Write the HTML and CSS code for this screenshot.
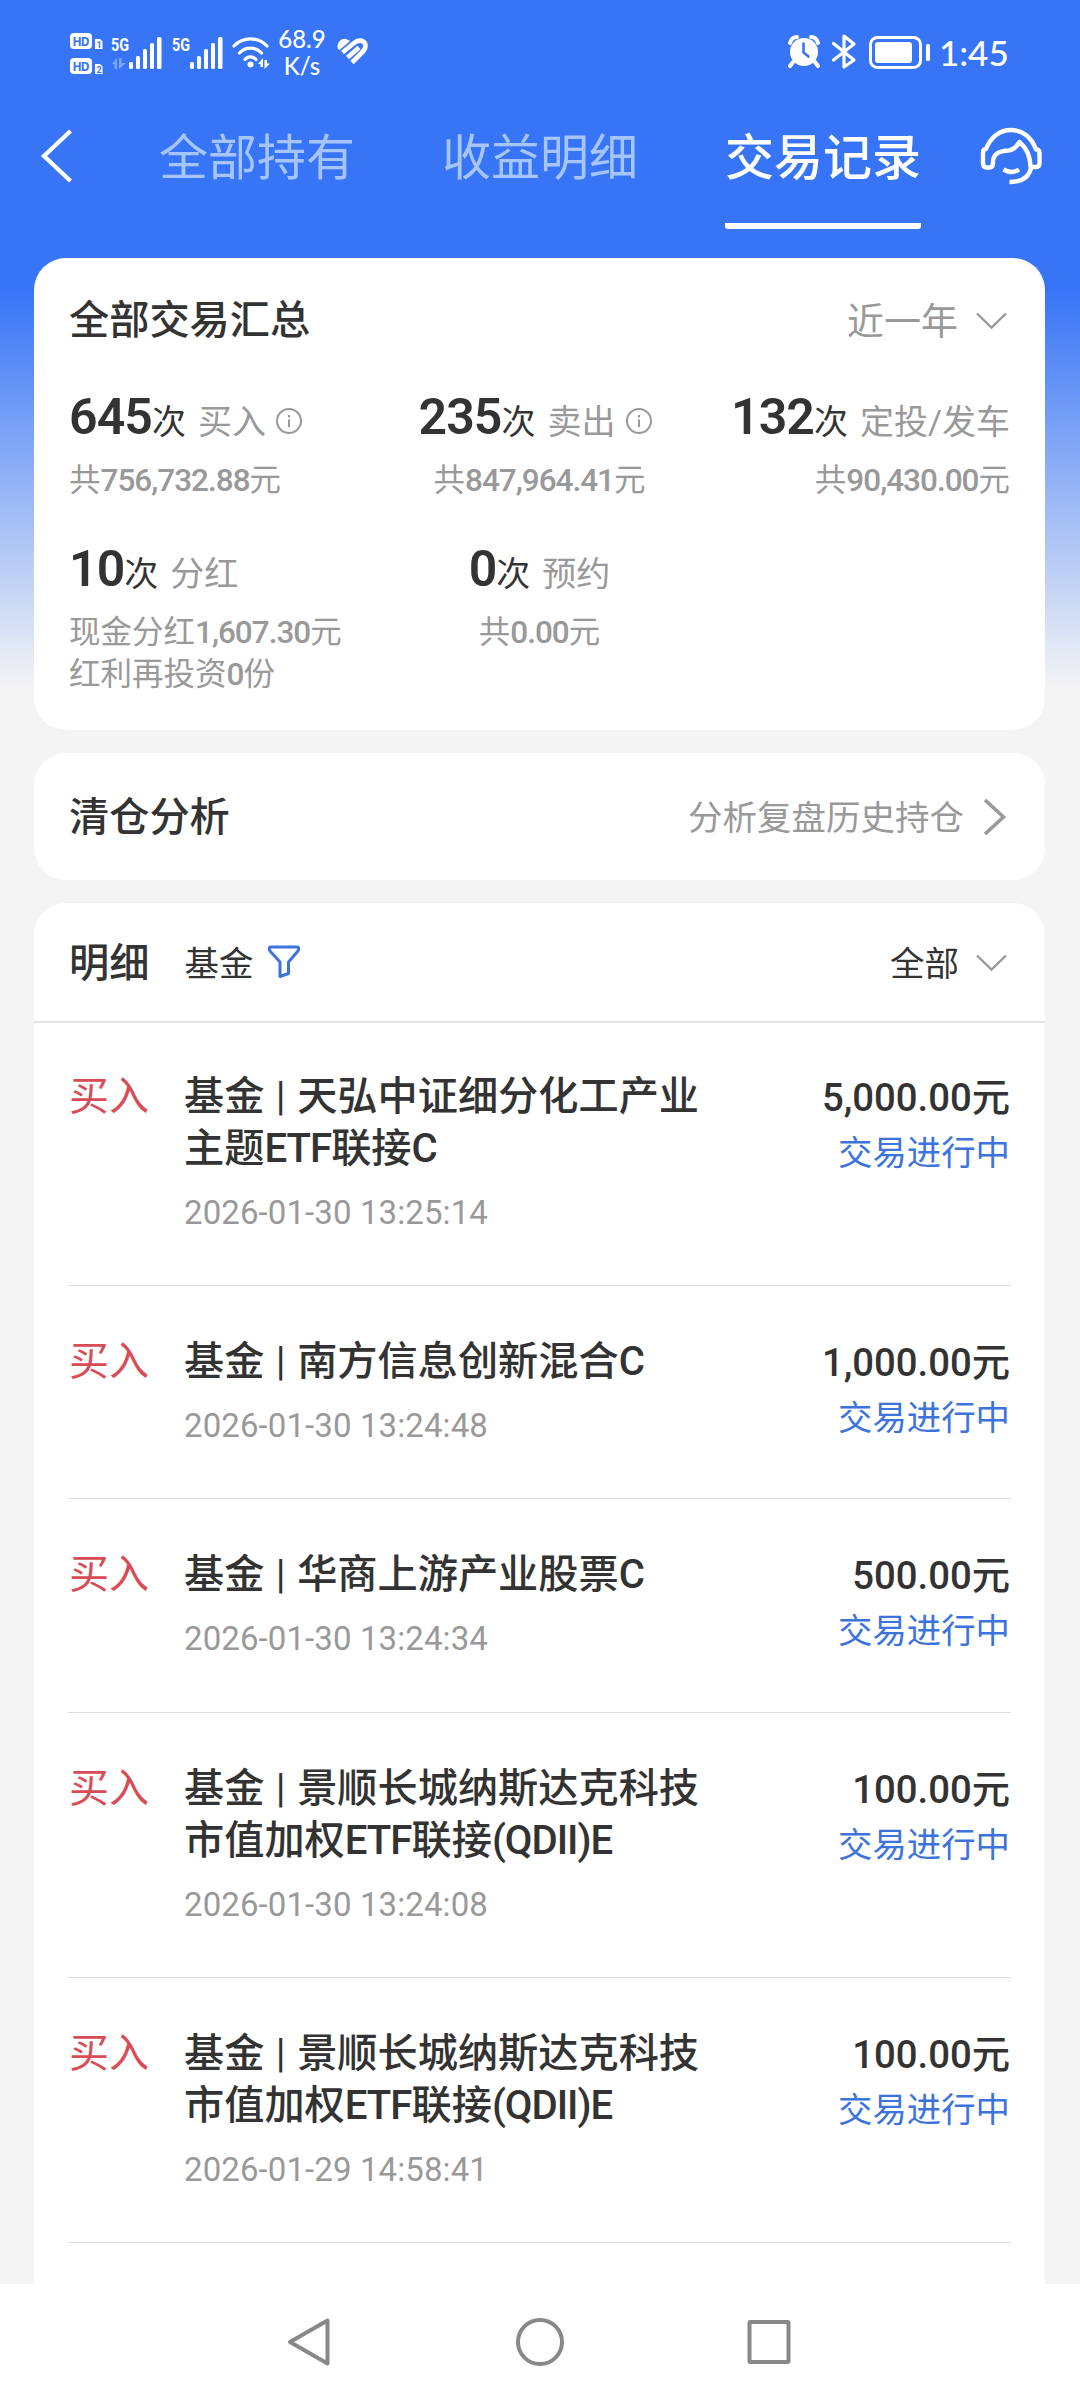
FILE: index.html
```html
<!DOCTYPE html>
<html lang="zh-CN">
<head>
<meta charset="utf-8">
<title>交易记录</title>
<link rel="stylesheet" href="styles.css">
</head>
<body>
<div class="app">
  <header class="top">
    <div class="status">
      <svg class="status-left" width="202" height="60" viewBox="0 0 202 60" fill="#fff">
        <rect x="0" y="12" width="22" height="16" rx="4" />
        <rect x="0" y="37" width="22" height="16" rx="4" />
        <g class="hd"><text x="2.5" y="25" textLength="17">HD</text><text x="2.5" y="50" textLength="17">HD</text></g>
        <path d="M25 18h5l2.500 2.500V28H25z" />
        <path d="M25 43h5l2.500 2.500V53H25z" />
        <g class="sim"><text x="26.500" y="27">1</text><text x="26.500" y="52">2</text></g>
        <g class="net"><text x="41" y="30" textLength="18" lengthAdjust="spacingAndGlyphs">5G</text><text x="102" y="30" textLength="18" lengthAdjust="spacingAndGlyphs">5G</text></g>
        <path opacity=".35" d="M42 43l5-6v11h-2.500v-5zM49 37h2.500v5H56l-7 6z" />
        <g id="bars"><rect x="59" y="41" width="4" height="7" rx="1.500"/><rect x="66" y="35" width="4" height="13" rx="1.500"/><rect x="73" y="28" width="4" height="20" rx="1.500"/><rect x="80" y="22" width="4" height="26" rx="1.500"/><rect x="87" y="16" width="4.500" height="32" rx="1.500"/></g>
        <use href="#bars" x="61" />
        <g fill="none" stroke="#fff" stroke-width="3.200" stroke-linecap="round"><path d="M164 25c9-9.500 24-9.500 33 0M169.500 32c6-6.500 16-6.500 22 0M175 38.500c3-3.500 8-3.500 11 0"/></g>
        <circle cx="180.500" cy="43.500" r="3" />
        <path d="M188 43l5-6v9h-2.500v-3zM194.500 39h2.500v3.500h3l-5.500 5.500z" />
      </svg>
      <div class="speed"><span>68.9</span><span>K/s</span></div>
      <svg class="health" width="32" height="28" viewBox="0 0 32 28">
        <path class="lobe" d="M1 11C-1 5 4 0 9 1l4 2L2.500 12z"/>
        <path class="pulse" d="M5.500 14.500L17 5C21 1.500 26 2 28 5.500c1.500 3.500 0 6-3 9L15 24.500M10.500 19.500L22 9.500"/>
      </svg>
      <svg class="status-right" width="150" height="36" viewBox="0 0 150 36" fill="#fff">
        <circle cx="16" cy="18" r="14"/>
        <path d="M5 28l-3 4M27 28l3 4M2 9c1-4 4-6 7-6M30 9c-1-4-4-6-7-6" fill="none" stroke="#fff" stroke-width="4" stroke-linecap="round"/>
        <path d="M15.500 9.500v9l5 4" fill="none" stroke="#3875f6" stroke-width="2.600" stroke-linecap="round"/>
        <path d="M45.500 9.500L66 26l-10 7V2l10 8-20.500 16" fill="none" stroke="#fff" stroke-width="3.200" stroke-linejoin="round" stroke-linecap="round"/>
        <rect x="82.500" y="3.500" width="50" height="30" rx="7" fill="none" stroke="#fff" stroke-width="3"/>
        <rect x="87" y="8" width="37" height="21" rx="3"/>
        <rect x="138" y="10" width="4" height="17" rx="1.500"/>
      </svg>
      <span class="clock">1:45</span>
    </div>
    <nav class="nav">
      <svg class="back" width="34" height="56" viewBox="0 0 34 56"><path d="M31.500 3L5 28l26.500 25"/></svg>
      <span class="tab">全部持有</span>
      <span class="tab">收益明细</span>
      <span class="tab tab-on">交易记录</span>
      <svg class="service" width="64" height="60" viewBox="0 0 64 60">
        <path d="M8 23C12.500 11 22 4 33 4s20.500 7 25 19.500c2.500 0 3.500 1 3.500 3.500v10c0 2.500-1 4-3.500 4h-5.500c0-9-3-18-11-25-3 5-6 8-11 8.500-8 .5-15 2-15.500 11V37c0 3-1 4.500-3.500 4.500H8.500C6 41.500 5 40 5 37V27c0-2.500.5-4 3-4z"/>
        <path d="M53 42c-2 9-9 14-21.500 14M25.500 43.500c5 3 11 3 15.500 0" stroke-linecap="butt"/>
      </svg>
    </nav>
  </header>

  <main class="content">
    <section class="card summary">
      <div class="card-head">
        <h2 class="title">全部交易汇总</h2>
        <span class="range"><span class="label">近一年</span><svg class="chev" width="31" height="18" viewBox="0 0 31 18"><path d="M1 1.500L15.500 15.500 30 1.500"/></svg></span>
      </div>
      <div class="stats">
        <div class="stat">
          <p class="line"><b>645</b><span class="unit">次</span><span class="name">买入</span><svg class="info" width="28" height="28" viewBox="0 0 28 28"><circle cx="14" cy="14" r="12"/><path d="M14 8v2.500M14 12.500v7.500"/></svg></p>
          <p class="sub">共<span class="num">756,732.88</span>元</p>
        </div>
        <div class="stat mid">
          <p class="line"><b>235</b><span class="unit">次</span><span class="name">卖出</span><svg class="info" width="28" height="28" viewBox="0 0 28 28"><circle cx="14" cy="14" r="12"/><path d="M14 8v2.500M14 12.500v7.500"/></svg></p>
          <p class="sub">共<span class="num">847,964.41</span>元</p>
        </div>
        <div class="stat end">
          <p class="line"><b>132</b><span class="unit">次</span><span class="name">定投/发车</span></p>
          <p class="sub">共<span class="num">90,430.00</span>元</p>
        </div>
        <div class="stat">
          <p class="line"><b>10</b><span class="unit">次</span><span class="name">分红</span></p>
          <p class="sub">现金分红<span class="num">1,607.30</span>元<br>红利再投资<span class="num">0</span>份</p>
        </div>
        <div class="stat mid">
          <p class="line"><b>0</b><span class="unit">次</span><span class="name">预约</span></p>
          <p class="sub">共<span class="num">0.00</span>元</p>
        </div>
      </div>
    </section>

    <section class="card clearing">
      <h2 class="title">清仓分析</h2>
      <span class="more"><span class="label">分析复盘历史持仓</span><svg class="arrow" width="24" height="38" viewBox="0 0 24 38"><path d="M2 2l18.500 17L2 36"/></svg></span>
    </section>

    <section class="card detail">
      <div class="detail-head">
        <h2 class="title">明细</h2>
        <span class="kind label">基金</span>
        <svg class="filter" width="34" height="34" viewBox="0 0 34 34"><path d="M3 2h28q1.500 1.500 0 4L21.500 17v11.500l-8.500 3V17L3 6q-1.500-2.500 0-4z"/></svg>
        <span class="all"><span class="label">全部</span><svg class="chev" width="31" height="18" viewBox="0 0 31 18"><path d="M1 1.500L15.500 15.500 30 1.500"/></svg></span>
      </div>
      <ul class="list">
        <li class="row"><span class="type">买入</span><div class="fund"><p class="fund-name">基金<span class="sep"> | </span>天弘中证细分化工产业<br>主题<span class="latin">ETF</span>联接<span class="latin">C</span></p><p class="time">2026-01-30 13:25:14</p></div><div class="money"><p class="amount">5,000.00元</p><p class="state">交易进行中</p></div></li>
        <li class="row"><span class="type">买入</span><div class="fund"><p class="fund-name">基金<span class="sep"> | </span>南方信息创新混合<span class="latin">C</span></p><p class="time">2026-01-30 13:24:48</p></div><div class="money"><p class="amount">1,000.00元</p><p class="state">交易进行中</p></div></li>
        <li class="row"><span class="type">买入</span><div class="fund"><p class="fund-name">基金<span class="sep"> | </span>华商上游产业股票<span class="latin">C</span></p><p class="time">2026-01-30 13:24:34</p></div><div class="money"><p class="amount">500.00元</p><p class="state">交易进行中</p></div></li>
        <li class="row"><span class="type">买入</span><div class="fund"><p class="fund-name">基金<span class="sep"> | </span>景顺长城纳斯达克科技<br>市值加权<span class="latin">ETF</span>联接<span class="latin">(QDII)E</span></p><p class="time">2026-01-30 13:24:08</p></div><div class="money"><p class="amount">100.00元</p><p class="state">交易进行中</p></div></li>
        <li class="row"><span class="type">买入</span><div class="fund"><p class="fund-name">基金<span class="sep"> | </span>景顺长城纳斯达克科技<br>市值加权<span class="latin">ETF</span>联接<span class="latin">(QDII)E</span></p><p class="time">2026-01-29 14:58:41</p></div><div class="money"><p class="amount">100.00元</p><p class="state">交易进行中</p></div></li>
      </ul>
    </section>
  </main>

  <footer class="keys">
    <svg width="46" height="52" viewBox="0 0 46 52"><path d="M41.500 4.500v43L4 26z"/></svg>
    <svg width="52" height="52" viewBox="0 0 52 52"><circle cx="27" cy="26" r="22"/></svg>
    <svg width="46" height="46" viewBox="0 0 46 46"><rect x="3.500" y="3" width="39" height="40" rx="1"/></svg>
  </footer>
</div>
</body>
</html>
```

FILE: styles.css
```css
* { box-sizing: border-box; margin: 0; padding: 0; }
body {
  width: 1080px;
  height: 2400px;
  overflow: hidden;
  background: #f4f4f4;
  color: #333;
  font-family: Roboto, "Noto Sans CJK SC", sans-serif;
}
svg { display: block; flex: none; }
.app {
  display: flex;
  flex-direction: column;
  height: 2400px;
  background: linear-gradient(#3875f6 290px, #f4f4f4 688px);
}
.top { height: 258px; flex: none; color: #fff; }

.status { display: flex; height: 104px; padding-left: 70px; }
.status-left { margin-top: 21px; }
.hd { font: 700 12px "Noto Sans"; fill: #3875f6; }
.sim { font: 700 9px Roboto; fill: #3875f6; }
.net { font: 700 19px Roboto; }
.speed {
  width: 60px;
  padding-top: 25px;
  text-align: center;
  font: 500 24px/27px Lato;
}
.speed span { display: block; }
.health { margin: 38px 0 0 5px; }
.lobe { fill: #fff; }
.pulse { fill: none; stroke: #fff; stroke-width: 4.600; stroke-linejoin: round; }
.status-right { margin: 34px 0 0 auto; }
.clock { width: 142px; padding: 33px 0 0 1px; font: 500 35px/38px Lato; }

.nav { display: flex; height: 130px; padding-left: 39px; }
.back { margin-top: 24px; fill: none; stroke: #fff; stroke-width: 4.200; }
.tab {
  width: 196px;
  height: 125px;
  padding-top: 17px;
  margin-left: 87px;
  color: #a5c5fc;
  font-size: 49px;
  line-height: 76px;
}
.back + .tab { margin-left: 86px; }
.tab-on { color: #fff; font-weight: 500; border-bottom: 6px solid #fff; border-radius: 3px; }
.service {
  margin: 22px 38px 0 auto;
  fill: none;
  stroke: #fff;
  stroke-width: 4.400;
  stroke-linecap: round;
  stroke-linejoin: round;
}

.content { flex: 1; display: flex; flex-direction: column; gap: 23px; padding: 0 35px 0 34px; min-height: 0; }
.card { background: #fff; border-radius: 32px; padding: 0 35px; }
.title { font-size: 40.200px; line-height: 52px; font-weight: 500; }
.label { margin-bottom: 5px; }
.chev { fill: none; stroke: #999; stroke-width: 2.400; }
.summary { height: 472px; padding-top: 37px; }
.card-head { display: flex; justify-content: space-between; align-items: center; height: 52px; }
.range, .more, .all { display: flex; align-items: center; font-size: 34.500px; color: #999; }
.range { font-size: 37px; gap: 18px; padding-right: 3px; }
.stats { display: grid; grid-template-columns: 313px 313px 1fr; margin-top: 35px; }
.stat { height: 152px; }
.mid { text-align: center; padding-left: 2px; }
.end { text-align: right; }
.line { height: 78px; display: flex; align-items: baseline; line-height: 70px; font-size: 34px; }
.mid .line { justify-content: center; }
.end .line { justify-content: flex-end; }
.line b { font-size: 50px; font-weight: 600; letter-spacing: -0.900px; }
.name { margin-left: 12px; color: #999; }
.info { margin: 0 8px 0 9px; align-self: center; }
.info circle, .info path { fill: none; stroke: #999; stroke-width: 2; }
.sub { font-size: 31.500px; line-height: 42px; color: #999; }
.num { letter-spacing: -1px; font-weight: 500; }

.clearing { height: 127px; flex: none; display: flex; justify-content: space-between; align-items: center; padding-top: 2px; }
.more { gap: 19px; padding-right: 3px; }
.arrow { margin-bottom: 2px; fill: none; stroke: #999; stroke-width: 3.600; }

.detail { flex: 1; padding: 0; border-radius: 32px 32px 0 0; min-height: 0; }
.detail-head { display: flex; align-items: center; height: 120px; padding: 2px 38px 0 35px; border-bottom: 2px solid #e4e4e4; }
.detail-head .title { padding-top: 1px; }
.kind { margin-left: 35px; font-size: 34.500px; }
.filter { margin: 0 0 2px 14px; }
.filter path { fill: none; stroke: #3d73dc; stroke-width: 3; stroke-linejoin: round; }
.all { margin-left: auto; color: #333; gap: 17px; }
.list { list-style: none; padding: 0 34px; }
.row { display: flex; padding: 50px 1px 53.300px; border-bottom: 1px solid #dedede; }
.row:first-child { padding-top: 48px; padding-bottom: 53.200px; }
.type { width: 115px; font-size: 40px; line-height: 52px; color: #d84c55; }
.fund { flex: 1; }
.fund-name { font-size: 40.200px; line-height: 52px; font-weight: 500; }
.sep { font-weight: 400; margin: 0 1.500px; }
.latin { letter-spacing: -1px; }
.time { margin-top: 18px; font-size: 33px; line-height: 39px; letter-spacing: 0.100px; color: #999; }
.money { text-align: right; }
.amount { font-size: 38.300px; line-height: 53px; font-weight: 500; }
.state { padding-top: 3px; font-size: 34.400px; line-height: 53px; color: #3d73dc; }

.keys { display: flex; height: 116px; flex: none; align-items: center; background: #fff; padding-left: 286px; gap: 181px; }
.keys svg { fill: none; stroke: #888; stroke-width: 4; stroke-linejoin: round; }
```
